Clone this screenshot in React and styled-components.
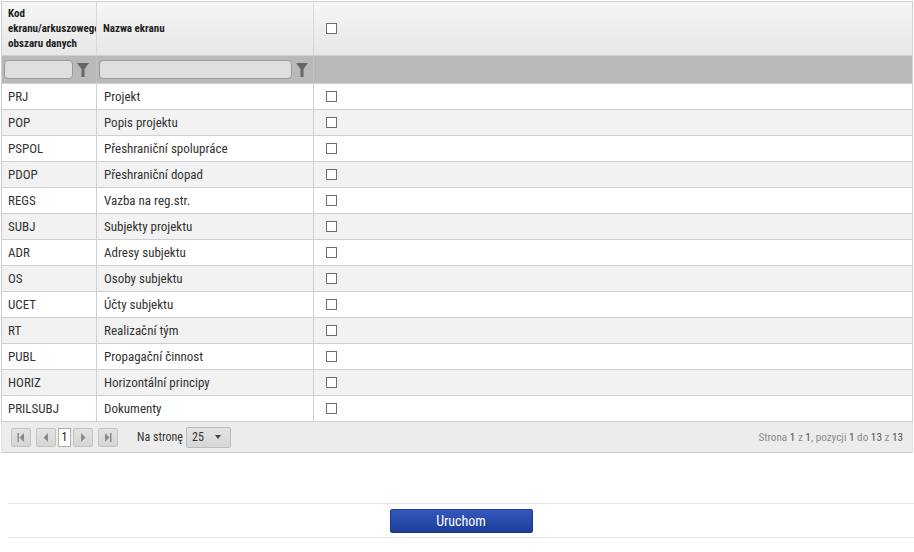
import React from "react";
import styled, { createGlobalStyle } from "styled-components";

const GlobalStyle = createGlobalStyle`
  body {
    margin: 0;
    background: #ffffff;
    font-family: "Roboto Condensed", "Liberation Sans Narrow", Roboto, sans-serif;
    color: #333333;
  }
`;

const Page = styled.div`
  width: 914px;
  height: 552px;
  padding-top: 1px;
  box-sizing: border-box;
`;

const Grid = styled.div`
  margin-left: 1px;
  width: 912px;
  border: 1px solid #cfcfcf;
  border-bottom: none;
  box-sizing: border-box;
`;

const Row = styled.div`
  display: grid;
  grid-template-columns: 95px 217px 1fr;
  height: ${(p) => p.h || 26}px;
  background: ${(p) => p.bg || "#ffffff"};
  border-bottom: 1px solid #d0d0d0;
  box-sizing: border-box;
`;

const HeadRow = styled(Row)`
  background: linear-gradient(#f6f6f6, #e7e7e7);
`;

const Cell = styled.div`
  display: flex;
  align-items: center;
  padding-left: ${(p) => p.pl ?? 6}px;
  border-right: ${(p) => (p.last ? "none" : "1px solid #d0d0d0")};
  overflow: hidden;
  font-size: 13px;
  color: #333333;
  white-space: nowrap;
`;

const HeadCell = styled(Cell)`
  font-size: 11px;
  font-weight: bold;
  line-height: 15px;
  white-space: normal;
  color: #222222;
  border-right-color: #d8d8d8;
`;

const FilterCell = styled.div`
  display: flex;
  align-items: center;
  padding-left: 2px;
  gap: 4px;
  border-right: ${(p) => (p.last ? "none" : "1px solid #c4c4c4")};
`;

const FilterInput = styled.div`
  width: ${(p) => p.w}px;
  height: 19px;
  background: #dedede;
  border: 1px solid #9a9a9a;
  border-radius: 4px;
  box-sizing: border-box;
`;

const Check = styled.span`
  display: inline-block;
  width: 11px;
  height: 11px;
  border: 1px solid #6e6e6e;
  background: #ffffff;
  box-sizing: border-box;
`;

const Pager = styled.div`
  display: flex;
  align-items: center;
  height: 31px;
  margin-left: 1px;
  width: 912px;
  padding: 0 9px 0 9px;
  box-sizing: border-box;
  background: #ececec;
  border-bottom: 1px solid #cccccc;
  border-left: 1px solid #e0e0e0;
  border-right: 1px solid #e0e0e0;
`;

const NavBtn = styled.div`
  width: 20px;
  height: 19px;
  display: flex;
  align-items: center;
  justify-content: center;
  background: linear-gradient(#e2e2e2, #d6d6d6);
  border: 1px solid #c4c4c4;
  border-radius: 2px;
  box-sizing: border-box;
  margin-left: ${(p) => p.ml || 0}px;
`;

const PageInput = styled.div`
  width: 13px;
  height: 19px;
  margin: 0 2px;
  background: #ffffff;
  border: 1px solid #b0b0b0;
  box-sizing: border-box;
  font-size: 12px;
  display: flex;
  align-items: center;
  justify-content: center;
  color: #222;
`;

const PerPageLabel = styled.span`
  margin-left: 19px;
  font-size: 12px;
  color: #333333;
`;

const Select = styled.div`
  margin-left: 3px;
  width: 45px;
  height: 21px;
  display: flex;
  align-items: center;
  justify-content: space-between;
  padding: 0 9px 0 5px;
  box-sizing: border-box;
  background: linear-gradient(#e4e4e4, #d6d6d6);
  border: 1px solid #bcbcbc;
  border-radius: 2px;
  font-size: 12px;
  color: #333;
`;

const Caret = styled.span`
  width: 0;
  height: 0;
  border-left: 3.5px solid transparent;
  border-right: 3.5px solid transparent;
  border-top: 4px solid #444;
`;

const Summary = styled.span`
  margin-left: auto;
  font-size: 11.2px;
  color: #8a8a8a;

  b {
    font-weight: normal;
    color: #555555;
  }
`;

const Footer = styled.div`
  margin: 50px 0 0 8px;
  border-top: 1px solid #e6e6e6;
  border-bottom: 1px solid #e6e6e6;
  height: 35px;
  display: flex;
  align-items: center;
  justify-content: center;
  box-sizing: border-box;
`;

const RunButton = styled.button`
  width: 143px;
  height: 24px;
  border: 1px solid #1d3a8c;
  border-radius: 2px;
  background: linear-gradient(#3458bd, #1c3d98);
  color: #ffffff;
  font-family: inherit;
  font-size: 14px;
  cursor: pointer;
`;

const FunnelIcon = () => (
  <svg width="12" height="14" viewBox="0 0 12 14">
    <path d="M0 0 H12 L7.5 6 V14 H4.5 V6 Z" fill="#666666" />
  </svg>
);

const NavIcon = ({ dir, bar }) => (
  <svg width="8" height="9" viewBox="0 0 8 9">
    {dir === "left" ? (
      <>
        {bar && <rect x="0.5" y="0" width="1.5" height="9" fill="#8a8a8a" />}
        <path d={bar ? "M7 0 V9 L2.5 4.5 Z" : "M6 0 V9 L1.5 4.5 Z"} fill="#8a8a8a" />
      </>
    ) : (
      <>
        <path d={bar ? "M1 0 V9 L5.5 4.5 Z" : "M2 0 V9 L6.5 4.5 Z"} fill="#8a8a8a" />
        {bar && <rect x="6" y="0" width="1.5" height="9" fill="#8a8a8a" />}
      </>
    )}
  </svg>
);

const rows = [
  ["PRJ", "Projekt"],
  ["POP", "Popis projektu"],
  ["PSPOL", "Přeshraniční spolupráce"],
  ["PDOP", "Přeshraniční dopad"],
  ["REGS", "Vazba na reg.str."],
  ["SUBJ", "Subjekty projektu"],
  ["ADR", "Adresy subjektu"],
  ["OS", "Osoby subjektu"],
  ["UCET", "Účty subjektu"],
  ["RT", "Realizační tým"],
  ["PUBL", "Propagační činnost"],
  ["HORIZ", "Horizontální principy"],
  ["PRILSUBJ", "Dokumenty"],
];

export default function App() {
  return (
    <Page>
      <GlobalStyle />
      <Grid>
        <HeadRow h={54}>
          <HeadCell pl={6}>Kod ekranu/arkuszowego obszaru danych</HeadCell>
          <HeadCell pl={6}>Nazwa ekranu</HeadCell>
          <HeadCell last pl={12}>
            <Check />
          </HeadCell>
        </HeadRow>
        <Row h={28} bg="#b9b9b9">
          <FilterCell>
            <FilterInput w={69} />
            <FunnelIcon />
          </FilterCell>
          <FilterCell>
            <FilterInput w={193} />
            <FunnelIcon />
          </FilterCell>
          <FilterCell last />
        </Row>
        {rows.map(([code, name], i) => (
          <Row key={code} bg={i % 2 ? "#f2f2f2" : "#ffffff"}>
            <Cell>{code}</Cell>
            <Cell pl={7}>{name}</Cell>
            <Cell last pl={12}>
              <Check />
            </Cell>
          </Row>
        ))}
      </Grid>
      <Pager>
        <NavBtn>
          <NavIcon dir="left" bar />
        </NavBtn>
        <NavBtn ml={5}>
          <NavIcon dir="left" />
        </NavBtn>
        <PageInput>1</PageInput>
        <NavBtn>
          <NavIcon dir="right" />
        </NavBtn>
        <NavBtn ml={5}>
          <NavIcon dir="right" bar />
        </NavBtn>
        <PerPageLabel>Na stronę</PerPageLabel>
        <Select>
          25
          <Caret />
        </Select>
        <Summary>
          Strona <b>1</b> z <b>1</b>, pozycji <b>1</b> do <b>13</b> z <b>13</b>
        </Summary>
      </Pager>
      <Footer>
        <RunButton>Uruchom</RunButton>
      </Footer>
    </Page>
  );
}
